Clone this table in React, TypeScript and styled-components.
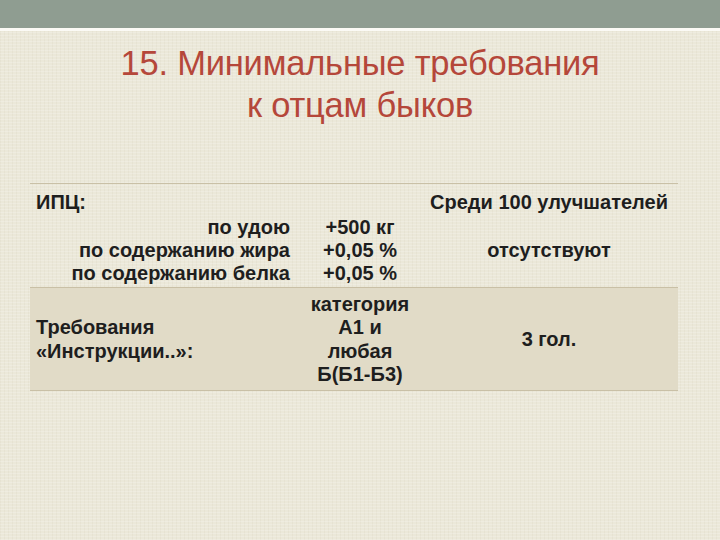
import React from "react";
import styled, { createGlobalStyle } from "styled-components";

const Global = createGlobalStyle`
  html, body { margin: 0; padding: 0; }
  body { width: 720px; height: 540px; overflow: hidden; background: #ebe8d9; }
`;

const Slide = styled.div`
  width: 720px;
  height: 540px;
  display: flex;
  flex-direction: column;
  background-color: #ebe8d9;
  background-image:
    repeating-linear-gradient(0deg, rgba(255,255,255,0.18) 0 1px, transparent 1px 3px),
    repeating-linear-gradient(90deg, rgba(190,180,150,0.10) 0 1px, transparent 1px 4px);
  font-family: "Liberation Sans", Arial, sans-serif;
`;

const TopBar = styled.div`
  height: 28px;
  background: #8f9d91;
  border-bottom: 3px solid #fbfaf5;
  flex-shrink: 0;
`;

const Title = styled.h1`
  margin: 11px 0 0 0;
  text-align: center;
  font-weight: 400;
  font-size: 34.5px;
  line-height: 42px;
  color: #b5473a;
  letter-spacing: -0.2px;
`;

const Table = styled.div`
  margin: 57px 42px 0 30px;
  display: grid;
  grid-template-columns: 270px 120px 1fr;
  border-top: 1px solid #c9c0a6;
`;

const Row = styled.div<{ $shaded?: boolean }>`
  display: contents;
  & > div {
    background: ${(p) => (p.$shaded ? "#e1dbc7" : "transparent")};
    border-bottom: 1px solid #c9c0a6;
    padding: ${(p) => (p.$shaded ? "5px 0 4px" : "5px 0 2px")};
  }
`;

const Cell = styled.div<{ $align?: "left" | "right" | "center"; $valign?: string; $lh?: number }>`
  display: flex;
  flex-direction: column;
  justify-content: ${(p) => p.$valign || "flex-start"};
  text-align: ${(p) => p.$align || "center"};
  font-weight: 700;
  font-size: 20px;
  line-height: ${(p) => p.$lh || 23}px;
  color: #1e1e1e;
`;

const Line = styled.div<{ $align?: "left" | "right" | "center"; $pr?: number; $pl?: number; $h?: number }>`
  text-align: ${(p) => p.$align || "inherit"};
  padding-right: ${(p) => p.$pr || 0}px;
  padding-left: ${(p) => p.$pl || 0}px;
  ${(p) => (p.$h ? `line-height: ${p.$h}px;` : "")}
  min-height: 1em;
  white-space: nowrap;
`;

export default function App() {
  return (
    <>
      <Global />
      <Slide>
        <TopBar />
        <Title>
          15. Минимальные требования
          <br />к отцам быков
        </Title>
        <Table>
          <Row>
            <Cell $align="right" $lh={23}>
              <Line $align="left" $pl={6} $h={27}>ИПЦ:</Line>
              <Line $pr={10}>по удою</Line>
              <Line $pr={10}>по содержанию жира</Line>
              <Line $pr={10}>по содержанию белка</Line>
            </Cell>
            <Cell $lh={23}>
              <Line $h={27}>&nbsp;</Line>
              <Line>+500 кг</Line>
              <Line>+0,05 %</Line>
              <Line>+0,05 %</Line>
            </Cell>
            <Cell $lh={23}>
              <Line $h={27}>Среди 100 улучшателей</Line>
              <Line>&nbsp;</Line>
              <Line>отсутствуют</Line>
              <Line>&nbsp;</Line>
            </Cell>
          </Row>
          <Row $shaded>
            <Cell $align="left" $valign="center" $lh={23.5}>
              <Line $pl={6}>Требования</Line>
              <Line $pl={6}>«Инструкции..»:</Line>
            </Cell>
            <Cell $lh={23.3}>
              <Line>категория</Line>
              <Line>А1 и</Line>
              <Line>любая</Line>
              <Line>Б(Б1-Б3)</Line>
            </Cell>
            <Cell $valign="center" $lh={23.3}>
              <Line>3 гол.</Line>
            </Cell>
          </Row>
        </Table>
      </Slide>
    </>
  );
}
